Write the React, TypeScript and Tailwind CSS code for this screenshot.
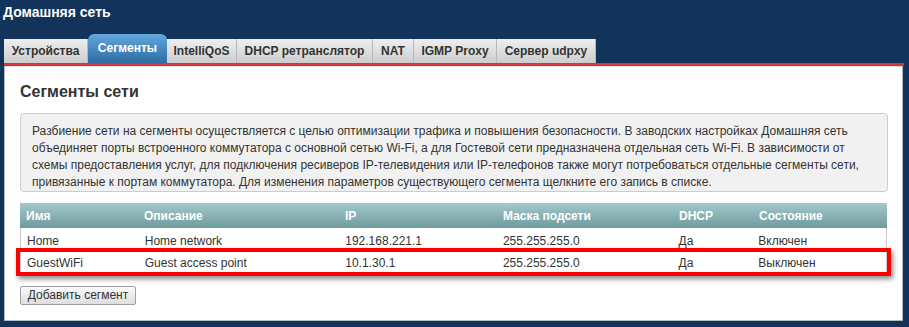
const tabs = [
  { label: "Устройства", w: "w-[84px]" },
  { label: "Сегменты", w: "w-[79px]", active: true },
  { label: "IntelliQoS", w: "w-[70px]" },
  { label: "DHCP ретранслятор", w: "w-[136px]" },
  { label: "NAT", w: "w-[41px]" },
  { label: "IGMP Proxy", w: "w-[83px]" },
  { label: "Сервер udpxy", w: "w-[99px]" },
];

const cols = ["w-[118px]", "w-[201px]", "w-[158px]", "w-[176px]", "w-[80px]", "w-[134px]"];
const head = ["Имя", "Описание", "IP", "Маска подсети", "DHCP", "Состояние"];
const rows = [
  ["Home", "Home network", "192.168.221.1", "255.255.255.0", "Да", "Включен"],
  ["GuestWiFi", "Guest access point", "10.1.30.1", "255.255.255.0", "Да", "Выключен"],
];

const App = () => {
  return (
    <div className="h-[327px] w-[909px] overflow-hidden bg-[#12335a] font-['Liberation_Sans',Arial,sans-serif] text-[12px] text-[#333]">
      <h1 className="pl-[3px] pt-[4px] text-[14px] font-bold leading-[17px] text-white">
        Домашняя сеть
      </h1>

      <div className="ml-[4px] mt-[13px] flex h-[29px] items-end">
        {tabs.map((t) =>
          t.active ? (
            <div
              key={t.label}
              className={`${t.w} flex h-[29px] items-center justify-center rounded-t-[6px] bg-gradient-to-b from-[#63a8dc] to-[#2d6ca4] pb-[2px] font-bold text-white`}
            >
              {t.label}
            </div>
          ) : (
            <div
              key={t.label}
              className={`${t.w} flex h-[24px] items-center justify-center border-r border-[#b9b9b9] bg-gradient-to-b from-[#efefef] to-[#cdcdcd] font-bold text-[#333]`}
            >
              {t.label}
            </div>
          )
        )}
      </div>
      <div className="ml-[4px] h-[3px] w-[900px] bg-[#d5343a]" />

      <div className="ml-[4px] h-[255px] w-[899px] border border-t-0 border-[#b5bac0] bg-white px-[15px] shadow-[inset_0_1px_0_#d8dcdf]">
        <h2 className="pt-[16px] text-[16px] font-bold leading-[20px] text-[#333]">
          Сегменты сети
        </h2>

        <div className="mt-[11px] h-[79px] w-[868px] rounded-[4px] border border-[#cccccc] bg-[#f1f1f1] pl-[11px] pr-[10px] pt-[9px] leading-[17px] text-[#333]">
          Разбиение сети на сегменты осуществляется с целью оптимизации трафика и повышения безопасности. В заводских настройках Домашняя сеть объединяет порты встроенного коммутатора с основной сетью Wi-Fi, а для Гостевой сети предназначена отдельная сеть Wi-Fi. В зависимости от схемы предоставления услуг, для подключения ресиверов IP-телевидения или IP-телефонов также могут потребоваться отдельные сегменты сети, привязанные к портам коммутатора. Для изменения параметров существующего сегмента щелкните его запись в списке.
        </div>

        <div className="relative mt-[11px] w-[867px]">
          <div className="flex h-[25px] items-center bg-gradient-to-b from-[#a3c9cc] to-[#6f9b9d] font-bold text-white">
            {head.map((h, i) => (
              <div key={h} className={`${cols[i]} pl-[6px]`}>
                {h}
              </div>
            ))}
          </div>
          <div className="border-x border-b border-[#c9c9c9]">
            {rows.map((r) => (
              <div key={r[0]} className="flex h-[22px] items-center pt-[3px] text-[#333]">
                {r.map((c, i) => (
                  <div key={i} className={`${cols[i]} pl-[6px]`}>
                    {c}
                  </div>
                ))}
              </div>
            ))}
          </div>
          <div className="absolute left-[-4px] top-[45px] h-[28px] w-[875px] border-[4px] border-[#ff0000] shadow-[2px_3px_5px_rgba(0,0,0,0.45)]" />
        </div>

        <button className="mt-[13px] h-[19px] w-[116px] rounded-[2px] border border-[#a0a0a0] bg-gradient-to-b from-[#fbfbfb] to-[#dedede] text-[12px] leading-[17px] text-[#333]">
          Добавить сегмент
        </button>
      </div>
    </div>
  );
};

export default App;
